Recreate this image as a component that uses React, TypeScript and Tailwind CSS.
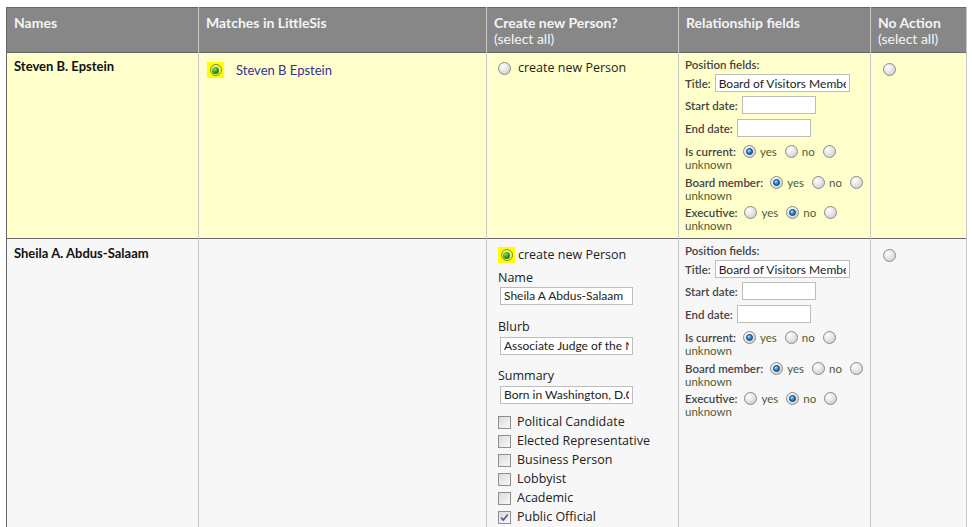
import React from 'react';

type RadioProps = {
  checked?: boolean;
  className?: string;
};

function Radio({ checked = false, className = '' }: RadioProps) {
  return (
    <span
      className={`flex h-[13px] w-[13px] shrink-0 items-center justify-center rounded-full border border-[#8c8c8c] bg-[radial-gradient(circle_at_35%_30%,#ffffff_0%,#e6e6e6_45%,#c4c4c4_100%)] ${className}`}
    >
      {checked && (
        <span className="h-[7px] w-[7px] rounded-full border border-[#0d3f6b] bg-[radial-gradient(circle_at_35%_30%,#bfe4ff_0%,#2f8fd8_45%,#0b4f8a_100%)]" />
      )}
    </span>
  );
}

// yellow highlighted radio used for the selected choice of a row
function PickedRadio() {
  return (
    <span className="flex h-[16px] w-[17px] shrink-0 items-center justify-center bg-[#ffff00]">
      <span className="flex h-[12px] w-[12px] items-center justify-center rounded-full border border-[#8a8a20] bg-[#f2f27a]">
        <span className="h-[7px] w-[7px] rounded-full bg-[radial-gradient(circle_at_35%_30%,#8fe060_0%,#2d9a10_50%,#0f5a00_100%)]" />
      </span>
    </span>
  );
}

function Checkbox({ checked = false }: { checked?: boolean }) {
  return (
    <span className="relative block h-[13px] w-[13px] shrink-0 border border-[#8f8f8f] bg-[linear-gradient(135deg,#dcdcdc,#f7f7f7)]">
      {checked && (
        <svg viewBox="0 0 11 11" className="absolute left-0 top-0 h-[11px] w-[11px]">
          <path d="M2.2 5.6 L4.3 8 L8.8 2.4" fill="none" stroke="#4a5c8c" strokeWidth="1.6" />
        </svg>
      )}
    </span>
  );
}

function TextBox({ value = '', width, className = '' }: { value?: string; width: string; className?: string }) {
  return (
    <input
      readOnly
      value={value}
      className={`h-[18px] ${width} border border-[#bdbdbd] bg-white px-[3px] font-['Lato',sans-serif] text-[12px] text-[#222] outline-none ${className}`}
    />
  );
}

type Choice = 'yes' | 'no' | 'unknown';

function ChoiceLine({ label, value }: { label: string; value: Choice }) {
  return (
    <div className="leading-[13px]">
      <div className="flex h-[13px] items-center">
        <span className="font-semibold text-[#444]">{label}</span>
        <Radio checked={value === 'yes'} className="ml-[7px]" />
        <span className="ml-[4px] text-[#525a36]">yes</span>
        <Radio checked={value === 'no'} className="ml-[8px]" />
        <span className="ml-[4px] text-[#525a36]">no</span>
        <Radio checked={value === 'unknown'} className="ml-[8px]" />
      </div>
      <div className="h-[13px] text-[#525a36]">unknown</div>
    </div>
  );
}

function RelationshipFields() {
  return (
    <div className="pb-[6px] pl-[6px] pt-[5px] text-[11.5px] leading-[13px]">
      <div className="h-[13px] font-semibold text-[#444]">Position fields:</div>
      <div className="mt-[3px] flex h-[18px] items-center">
        <span className="font-semibold text-[#444]">Title:</span>
        <TextBox value="Board of Visitors Member" width="w-[135px]" className="ml-[4px]" />
      </div>
      <div className="mt-[4px] flex h-[18px] items-center">
        <span className="font-semibold text-[#444]">Start date:</span>
        <TextBox width="w-[74px]" className="ml-[4px]" />
      </div>
      <div className="mt-[5px] flex h-[18px] items-center">
        <span className="font-semibold text-[#444]">End date:</span>
        <TextBox width="w-[74px]" className="ml-[4px]" />
      </div>
      <div className="mt-[8px]">
        <ChoiceLine label="Is current:" value="yes" />
      </div>
      <div className="mt-[5px]">
        <ChoiceLine label="Board member:" value="yes" />
      </div>
      <div className="mt-[4px]">
        <ChoiceLine label="Executive:" value="no" />
      </div>
    </div>
  );
}

const types = [
  { name: 'Political Candidate', checked: false },
  { name: 'Elected Representative', checked: false },
  { name: 'Business Person', checked: false },
  { name: 'Lobbyist', checked: false },
  { name: 'Academic', checked: false },
  { name: 'Public Official', checked: true },
];

const formFont = "font-['Open_Sans',sans-serif] text-[12.5px] text-[#222]";

function NewPersonForm() {
  return (
    <div className={`pl-[11px] pt-[8px] ${formFont}`}>
      <div className="flex h-[16px] items-center">
        <PickedRadio />
        <span className="ml-[3px]">create new Person</span>
      </div>
      <div className="mt-[8px] h-[14px] leading-[14px]">Name</div>
      <TextBox value="Sheila A Abdus-Salaam" width="w-[133px]" className="ml-[2px] mt-[2px] block" />
      <div className="mt-[15px] h-[14px] leading-[14px]">Blurb</div>
      <TextBox value="Associate Judge of the NY Court of Appeals" width="w-[133px]" className="ml-[2px] mt-[3px] block" />
      <div className="mt-[14px] h-[14px] leading-[14px]">Summary</div>
      <TextBox value="Born in Washington, D.C." width="w-[133px]" className="ml-[2px] mt-[3px] block" />
      <div className="mt-[9px]">
        {types.map((t) => (
          <div key={t.name} className="flex h-[19px] items-center">
            <Checkbox checked={t.checked} />
            <span className="ml-[6px]">{t.name}</span>
          </div>
        ))}
      </div>
    </div>
  );
}

export default function App() {
  return (
    <div className="min-h-[527px] bg-white pl-[6px] pt-[7px] font-['Lato',sans-serif]">
      <table className="w-[960px] table-fixed border-collapse border-l border-t border-[#666]">
        <colgroup>
          <col className="w-[192px]" />
          <col className="w-[288px]" />
          <col className="w-[192px]" />
          <col className="w-[192px]" />
          <col className="w-[96px]" />
        </colgroup>
        <thead>
          <tr className="border-b border-[#666] bg-[#878787] text-left align-top text-[14px] leading-[16px] text-[#f4f4f4]">
            <th className="border-r border-[#c8c8c8] pb-[5px] pl-[7px] pt-[7px] font-bold">Names</th>
            <th className="border-r border-[#c8c8c8] pb-[5px] pl-[7px] pt-[7px] font-bold">Matches in LittleSis</th>
            <th className="border-r border-[#c8c8c8] pb-[5px] pl-[7px] pt-[7px] font-bold">
              Create new Person?
              <div className="font-normal">(select all)</div>
            </th>
            <th className="border-r border-[#c8c8c8] pb-[5px] pl-[7px] pt-[7px] font-bold">Relationship fields</th>
            <th className="border-r border-[#c8c8c8] pb-[5px] pl-[7px] pt-[7px] font-bold">
              No Action
              <div className="font-normal">(select all)</div>
            </th>
          </tr>
        </thead>
        <tbody>
          <tr className="border-b border-[#666] bg-[#ffffcc] align-top">
            <td className="border-r border-[#c8c8c8] pl-[7px] pt-[6px] text-[13px] font-bold leading-[14px] text-[#111]">
              Steven B. Epstein
            </td>
            <td className="border-r border-[#c8c8c8] pl-[8px] pt-[9px]">
              <div className="flex h-[16px] items-center">
                <PickedRadio />
                <span className="ml-[12px] pt-[1px] text-[13px] text-[#333399]">Steven B Epstein</span>
              </div>
            </td>
            <td className={`border-r border-[#c8c8c8] pl-[11px] pt-[8px] ${formFont}`}>
              <div className="flex h-[14px] items-center">
                <Radio />
                <span className="ml-[7px]">create new Person</span>
              </div>
            </td>
            <td className="border-r border-[#c8c8c8]">
              <RelationshipFields />
            </td>
            <td className="border-r border-[#c8c8c8] pl-[12px] pt-[10px]">
              <Radio />
            </td>
          </tr>
          <tr className="bg-[#f7f7f7] align-top">
            <td className="border-r border-[#c8c8c8] pl-[7px] pt-[7px] text-[13px] font-bold leading-[14px] text-[#111]">
              Sheila A. Abdus-Salaam
            </td>
            <td className="border-r border-[#c8c8c8]" />
            <td className="border-r border-[#c8c8c8]">
              <NewPersonForm />
            </td>
            <td className="border-r border-[#c8c8c8]">
              <RelationshipFields />
            </td>
            <td className="border-r border-[#c8c8c8] pl-[12px] pt-[10px]">
              <Radio />
            </td>
          </tr>
        </tbody>
      </table>
    </div>
  );
}
